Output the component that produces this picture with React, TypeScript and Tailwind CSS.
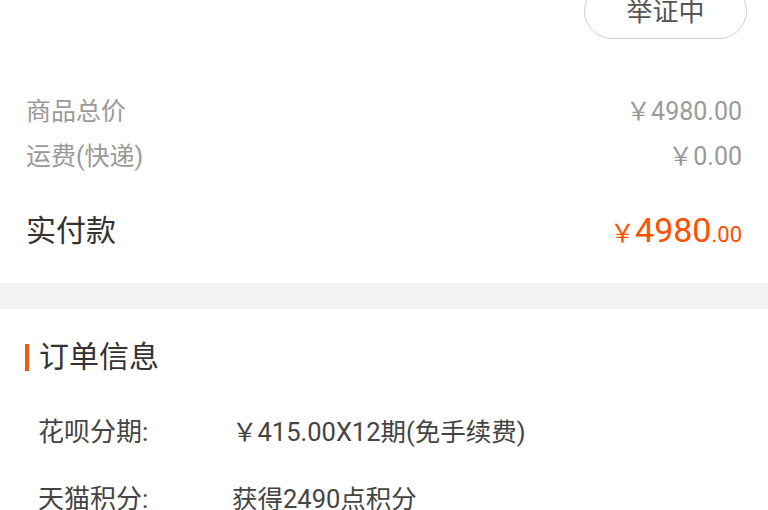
import React from "react";

export default function App() {
  const font = { fontFamily: "Roboto, 'Noto Sans CJK SC', sans-serif" };
  return (
    <div className="w-[768px] h-[510px] overflow-hidden bg-white" style={font}>
      {/* top section */}
      <div className="bg-white">
        <div className="h-[39px] flex justify-end pr-[21px]">
          <div className="-mt-[17px] h-[56px] w-[163px] rounded-full border border-[#cfcfcf] flex items-center justify-center text-[26px] text-[#555] pt-[2px]">
            举证中
          </div>
        </div>
        <div className="pt-[50px] pb-[28px] pl-[26px] pr-[26px]">
          <div className="h-[45px] flex items-center justify-between text-[25px] text-[#9a9a9a]">
            <span>商品总价</span>
            <span>￥4980.00</span>
          </div>
          <div className="h-[45px] flex items-center justify-between text-[25px] text-[#9a9a9a]">
            <span>运费(快递)</span>
            <span>￥0.00</span>
          </div>
          <div className="mt-[26px] h-[50px] flex items-center justify-between">
            <span className="text-[30px] text-[#333]">实付款</span>
            <span className="text-[#ff5000] flex items-baseline">
              <span className="text-[25px]">￥</span>
              <span className="text-[34px]">4980</span>
              <span className="text-[22px]">.00</span>
            </span>
          </div>
        </div>
      </div>
      <div className="h-[26px] bg-[#f2f2f2]" />
      {/* order info */}
      <div className="bg-white pt-[34px]">
        <div className="h-[28px] flex items-center pl-[25px]">
          <div className="w-[4px] h-[27px] bg-[#f0561d]" />
          <span className="ml-[10px] text-[30px] text-[#333] leading-none">订单信息</span>
        </div>
        <div className="mt-[28px] pl-[38px]">
          <div className="h-[67px] flex items-center text-[26px] text-[#444]">
            <span className="w-[194px]">花呗分期:</span>
            <span className="text-[25.5px]">￥415.00X12期(免手续费)</span>
          </div>
          <div className="h-[67px] flex items-center text-[26px] text-[#444]">
            <span className="w-[194px]">天猫积分:</span>
            <span className="text-[25.5px]">获得2490点积分</span>
          </div>
        </div>
      </div>
    </div>
  );
}
